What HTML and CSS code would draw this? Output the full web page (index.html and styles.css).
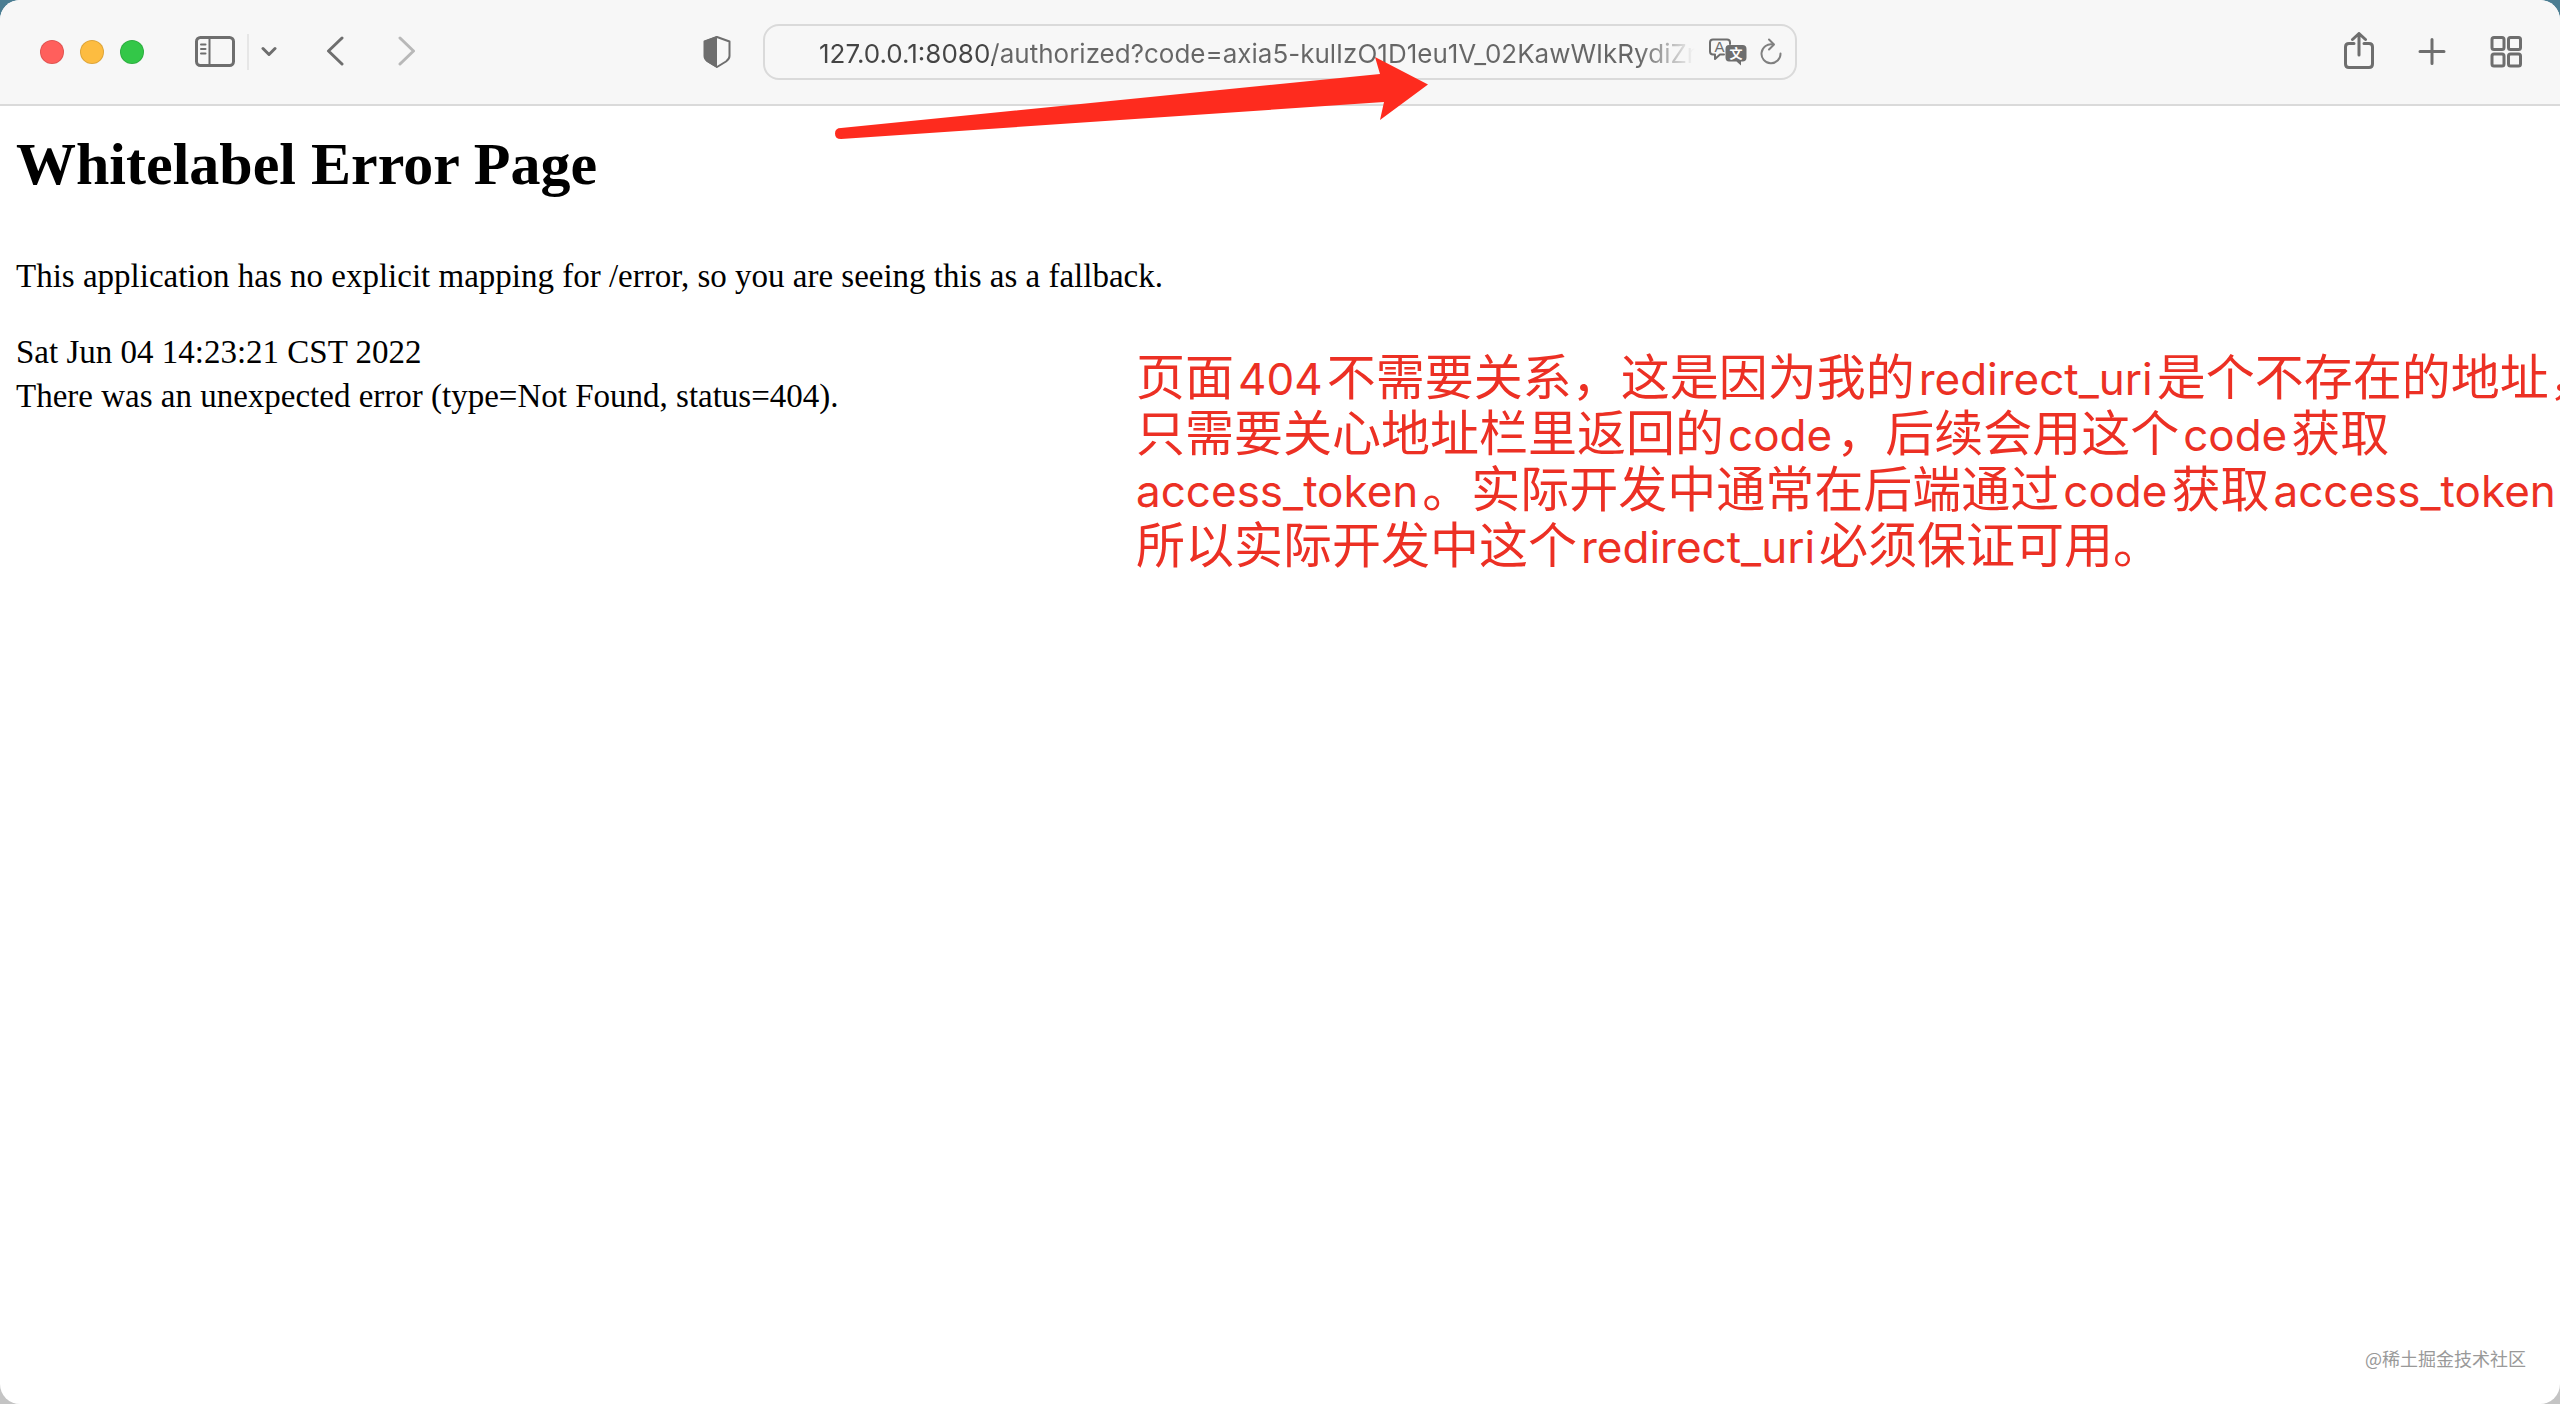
FILE: index.html
```html
<!DOCTYPE html>
<html lang="zh-CN">
<head>
  <meta charset="UTF-8">
  <meta name="viewport" content="width=device-width, initial-scale=1.0">
  <title>Whitelabel Error Page</title>
  <link rel="stylesheet" href="styles.css">
</head>
<body>

  <div class="window">

    <!-- TOOLBAR -->
    <header class="toolbar">
      <div class="toolbar-left">
        <div class="lights">
          <button type="button" class="light light-close" aria-label="Close"></button>
          <button type="button" class="light light-min" aria-label="Minimize"></button>
          <button type="button" class="light light-max" aria-label="Zoom"></button>
        </div>
        <div class="sidebar-group">
          <button type="button" class="icon-btn" aria-label="Sidebar">
            <svg width="40" height="32" viewBox="0 0 40 32">
              <rect x="1.5" y="1.500" width="37" height="28" rx="4"/>
              <path class="thin" d="M14.500 2v28"/>
              <path class="thin" d="M6 8.500h4.500M6 13h4.500M6 17.500h4.500"/>
            </svg>
          </button>
          <span class="divider"></span>
          <button type="button" class="icon-btn" aria-label="Tab groups">
            <svg width="16" height="12" viewBox="0 0 16 12"><path d="M2 2.500l6 6 6-6"/></svg>
          </button>
        </div>
        <nav class="history">
          <button type="button" class="icon-btn" aria-label="Back">
            <svg width="18" height="32" viewBox="0 0 18 32"><path d="M16 2L2.500 15 16 28"/></svg>
          </button>
          <button type="button" class="icon-btn icon-off" aria-label="Forward" disabled>
            <svg width="18" height="32" viewBox="0 0 18 32"><path d="M2 2l13.500 13L2 28"/></svg>
          </button>
        </nav>
        <button type="button" class="icon-btn shield" aria-label="Privacy report">
          <svg width="28" height="34" viewBox="0 0 28 34">
            <path class="solid" d="M14 1L1 6v15q0 4 4 6.500L14 33z"/>
            <path class="thin" d="M14 2L26.500 6.500V21q0 3-3.500 5.500L14 32 5 26.500Q1.500 24 1.500 21V6.500z"/>
          </svg>
        </button>
      </div>

      <div class="address">
        <input class="address-input" type="text" aria-label="Address" value="127.0.0.1:8080/authorized?code=axia5-kulIzO1D1eu1V_02KawWIkRydiZn">
        <button type="button" class="icon-btn" aria-label="Translate">
          <svg class="translate" width="38" height="28" viewBox="0 0 38 28">
            <path class="thin" d="M4 1.500h14q3 0 3 3V6M15 16.500h-4L6 21v-4.500H4q-3 0-3-3v-9q0-3 3-3"/>
            <path class="solid" d="M20 7h13.500q4 0 4 4v8.500q0 4-4 4H32v4L27.500 23.500H20q-3.500 0-3.500-4V11q0-4 3.500-4z"/>
            <text class="glyph-a" x="10.500" y="14">A</text>
            <text class="glyph-w" x="27" y="20">文</text>
          </svg>
        </button>
        <button type="button" class="icon-btn" aria-label="Reload">
          <svg class="reload" width="24" height="28" viewBox="0 0 24 28">
            <path d="M14 6.500A9.500 9.500 0 1 0 21.500 15.500"/>
            <path d="M10 1.500L15 6.500 10 11.500"/>
          </svg>
        </button>
      </div>

      <div class="toolbar-right">
        <button type="button" class="icon-btn" aria-label="Share">
          <svg width="30" height="40" viewBox="0 0 30 40">
            <path d="M10 11.500H5q-3.500 0-3.500 3.500v17q0 3.500 3.500 3.500h20q3.500 0 3.500-3.500V15q0-3.500-3.500-3.500h-5"/>
            <path d="M15 23V1.500M8.500 7.500L15 1.500 21.500 7.500"/>
          </svg>
        </button>
        <button type="button" class="icon-btn" aria-label="New tab">
          <svg width="28" height="28" viewBox="0 0 28 28"><path d="M14 1.500v24M2 13.500h24"/></svg>
        </button>
        <button type="button" class="icon-btn" aria-label="Tab overview">
          <svg width="32" height="32" viewBox="0 0 32 32">
            <rect x="2" y="1.500" width="12" height="12" rx="2"/>
            <rect x="18.500" y="1.500" width="12" height="12" rx="2"/>
            <rect x="2" y="18" width="12" height="12" rx="2"/>
            <rect x="18.500" y="18" width="12" height="12" rx="2"/>
          </svg>
        </button>
      </div>
    </header>

    <!-- PAGE -->
    <main class="page">
      <h1>Whitelabel Error Page</h1>
      <p>This application has no explicit mapping for /error, so you are seeing this as a fallback.</p>
      <div>Sat Jun 04 14:23:21 CST 2022</div>
      <div>There was an unexpected error (type=Not Found, status=404).</div>
    </main>

    <!-- ANNOTATIONS -->
    <svg class="arrow" width="594" height="84" viewBox="0 0 594 84">
      <path d="M6 71L545 17 540 0 593 27.500 545 63 549 45 6 82Q0 82 0 76.500T6 71z"/>
    </svg>
    <div class="note">
      <div>页面<span>404</span>不需要关系，这是因为我的<span>redirect_uri</span>是个不存在的地址，</div>
      <div>只需要关心地址栏里返回的<span>code</span>，后续会用这个<span>code</span>获取</div>
      <div><span class="lead">access_token</span>。实际开发中通常在后端通过<span>code</span>获取<span>access_token</span>，</div>
      <div>所以实际开发中这个<span>redirect_uri</span>必须保证可用。</div>
    </div>
    <div class="watermark">@稀土掘金技术社区</div>
  </div>

</body>
</html>
```

FILE: styles.css
```css
:root {
  --icon: #6e6e6e;
  --line: #dadada;
  --red: #fe2b1e;
  --note: #ec3024;
}

* { box-sizing: border-box; }

body {
  margin: 0;
  background: linear-gradient(#4b7d92 0, #4b7d92 50%, #c4c4c4 50%);
}

.window {
  position: relative;
  min-height: 100vh;
  overflow: hidden;
  background: #fff;
  border-radius: 20px;
}

/* toolbar */
.toolbar {
  display: grid;
  grid-template-columns: 1fr minmax(0, 1034px) 1fr;
  column-gap: 32px;
  align-items: center;
  height: 106px;
  padding: 0 38px;
  background: #f7f7f7;
  border-bottom: 2px solid var(--line);
}
  .toolbar-left, .toolbar-right, .lights, .sidebar-group, .history {
    display: flex;
    align-items: center;
  }
  .toolbar-right {
    justify-content: flex-end;
    gap: 44px;
  }
  .lights {
    gap: 16px;
    padding: 0 2px;
  }
    .light {
      width: 24px;
      height: 24px;
      padding: 0;
      border: 1px solid rgba(0,0,0,0.12);
      border-radius: 50%;
    }
    .light-close { background: #ff5f5c; }
    .light-min { background: #fdbc40; }
    .light-max { background: #33c748; }
  .sidebar-group {
    gap: 12px;
    margin-left: 49px;
  }
    .divider {
      width: 2px;
      height: 36px;
      background: #e6e6e6;
    }
  .history {
    gap: 54px;
    margin-left: 49px;
  }
  .shield { margin-left: auto; }

.icon-btn {
  display: flex;
  padding: 0;
  border: 0;
  background: none;
}
  .icon-btn svg {
    fill: none;
    stroke: var(--icon);
    stroke-width: 3;
    stroke-linecap: round;
    stroke-linejoin: round;
  }
  .icon-btn .thin { stroke-width: 2; }
  .icon-btn .solid {
    fill: var(--icon);
    stroke: none;
  }
  .icon-off { opacity: 0.45; }

.address {
  display: flex;
  align-items: center;
  gap: 12px;
  height: 56px;
  padding: 0 12px 0 54px;
  border: 2px solid var(--line);
  border-radius: 16px;
}
  .address-input {
    flex: 1;
    min-width: 0;
    height: 40px;
    padding: 3px 0 0;
    border: 0;
    background: linear-gradient(to right, #444 174px, #666 174px);
    background-clip: text;
    color: transparent;
    font: 26px Inter, "Liberation Sans", sans-serif;
    -webkit-mask-image: linear-gradient(to right, #000 820px, transparent 876px);
    mask-image: linear-gradient(to right, #000 820px, transparent 876px);
  }
  .icon-btn .reload { stroke-width: 2; stroke: #808080; }
  .translate text {
    stroke: none;
    text-anchor: middle;
    font-family: "Liberation Sans", "Noto Sans CJK SC", sans-serif;
  }
    .translate .glyph-a {
      fill: var(--icon);
      font-size: 15px;
    }
    .translate .glyph-w {
      fill: #fff;
      font-size: 13px;
      font-weight: bold;
    }

/* page */
.page {
  padding: 14px 16px;
  color: #000;
  font: 33px/44px "Liberation Serif", serif;
}
  .page h1 {
    margin: 0 0 46px;
    font-size: 60px;
    line-height: 88px;
  }
  .page p { margin: 0 0 32px; }

/* annotations */
.arrow {
  position: absolute;
  left: 835px;
  top: 57px;
  fill: var(--red);
}
.note {
  position: absolute;
  left: 1136px;
  top: 346px;
  color: var(--note);
  font: 49px/56px "Noto Sans CJK SC", sans-serif;
  white-space: nowrap;
}
  .note span {
    margin: 0 4px;
    font-family: Inter, sans-serif;
    font-size: 44px;
    line-height: 0;
  }
  .note .lead { margin-left: 0; }
.watermark {
  position: absolute;
  right: 34px;
  bottom: 34px;
  color: #999;
  font: 18px/24px "Noto Sans CJK SC", sans-serif;
}
```
